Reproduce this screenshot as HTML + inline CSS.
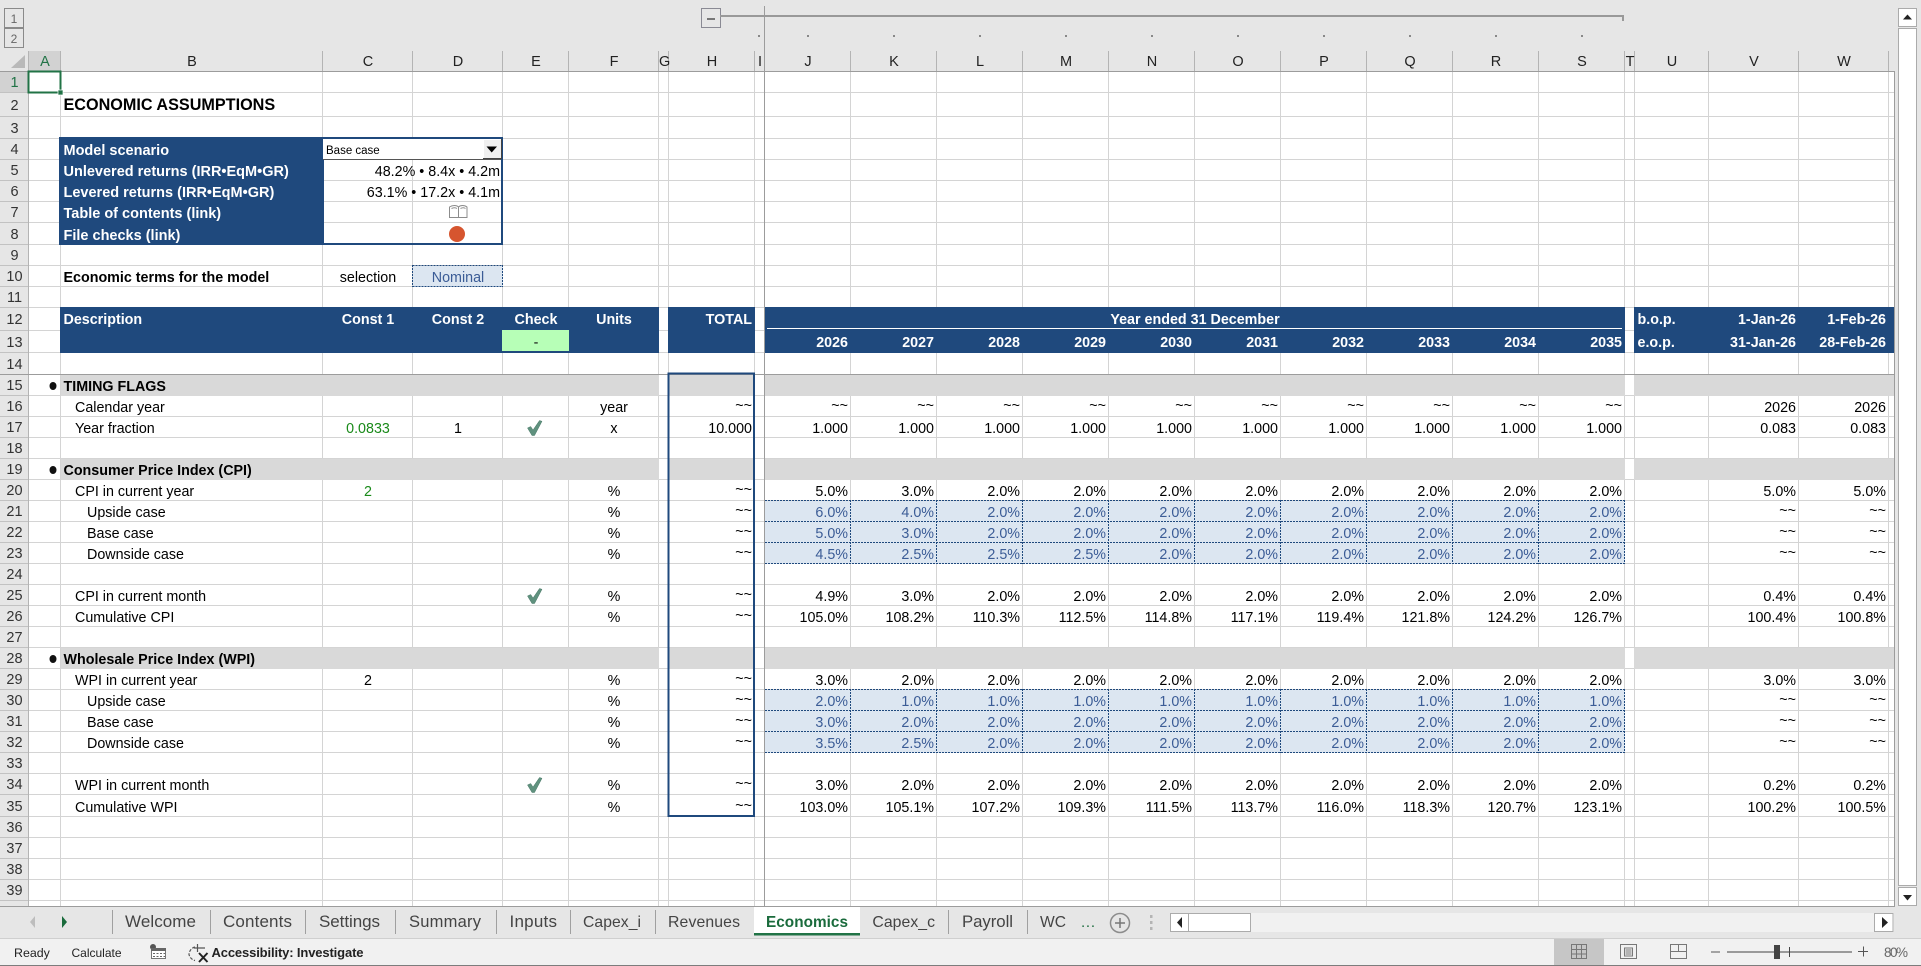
<!DOCTYPE html>
<html><head><meta charset="utf-8"><title>Economics</title>
<style>
html,body{margin:0;padding:0;width:1921px;height:966px;overflow:hidden;background:#e6e6e6}
body{position:relative;font-family:"Liberation Sans",sans-serif}
svg{position:absolute;left:0;top:0}
svg text{font-family:"Liberation Sans",sans-serif}
table{position:absolute;left:0;top:52px;width:1894px;table-layout:fixed;border-collapse:collapse;border-spacing:0;font-size:14.3px;line-height:1;color:#000}
tr{height:21px}
td{padding:2px 3px 0 0;text-align:right;white-space:nowrap;vertical-align:middle}
td.l{text-align:left;padding:2px 0 0 2.5px}
td.i1{text-align:left;padding:2px 0 0 14px}
td.i2{text-align:left;padding:2px 0 0 26px}
td.c{text-align:center;padding:2px 0 0 0}
td.y{padding:0 3px 2px 0}
td:first-child{padding:0;text-align:center;font-size:14.5px;color:#333}
tr.t td{padding:0;text-align:center;font-size:14.5px;color:#222}
.b{font-weight:bold}
.w{font-weight:bold;color:#fff;font-size:14.5px}
tr.h td{padding-top:0}
tr.h td:not(:first-child){font-weight:bold;color:#fff}
tr.h td.k{font-weight:normal;color:#111}
.g{color:#1a8a1a}
.e{color:#3b5c96}
tr.d td:nth-child(n+11):nth-child(-n+20){color:#3b5c96}
</style></head><body>
<svg width="1921" height="966" viewBox="0 0 1921 966">
<rect x="29" y="72" width="1865" height="834" fill="#fff"/>
<rect x="0" y="72" width="28" height="21" fill="#d2d2d2"/>
<rect x="29" y="51" width="32" height="20" fill="#d2d2d2"/>
<polygon points="11,68 25,68 25,55" fill="#b9b9b9"/>
<path fill="none" stroke="#c2c2c2" d="M0 92.5H28M0 116.5H28M0 138.5H28M0 159.5H28M0 180.5H28M0 201.5H28M0 222.5H28M0 244.5H28M0 265.5H28M0 286.5H28M0 307.5H28M0 330.5H28M0 352.5H28M0 395.5H28M0 416.5H28M0 437.5H28M0 458.5H28M0 479.5H28M0 500.5H28M0 521.5H28M0 542.5H28M0 563.5H28M0 584.5H28M0 605.5H28M0 626.5H28M0 647.5H28M0 668.5H28M0 689.5H28M0 710.5H28M0 731.5H28M0 752.5H28M0 773.5H28M0 794.5H28M0 816.5H28M0 837.5H28M0 858.5H28M0 879.5H28M0 900.5H28"/>
<path fill="none" stroke="#b4b4b4" d="M28.5 51V906M60.5 51V71M322.5 51V71M412.5 51V71M502.5 51V71M568.5 51V71M658.5 51V71M668.5 51V71M754.5 51V71M850.5 51V71M936.5 51V71M1022.5 51V71M1108.5 51V71M1194.5 51V71M1280.5 51V71M1366.5 51V71M1452.5 51V71M1538.5 51V71M1624.5 51V71M1634.5 51V71M1708.5 51V71M1798.5 51V71M1888.5 51V71"/>
<path fill="none" stroke="#d4d4d4" d="M60.5 72V906M322.5 72V906M412.5 72V906M502.5 72V906M568.5 72V906M658.5 72V906M668.5 72V906M754.5 72V906M850.5 72V906M936.5 72V906M1022.5 72V906M1108.5 72V906M1194.5 72V906M1280.5 72V906M1366.5 72V906M1452.5 72V906M1538.5 72V906M1624.5 72V906M1634.5 72V906M1708.5 72V906M1798.5 72V906M1888.5 72V906M29 92.5H1894M29 116.5H1894M29 138.5H1894M29 159.5H1894M29 180.5H1894M29 201.5H1894M29 222.5H1894M29 244.5H1894M29 265.5H1894M29 286.5H1894M29 307.5H1894M29 330.5H1894M29 352.5H1894M29 395.5H1894M29 416.5H1894M29 437.5H1894M29 458.5H1894M29 479.5H1894M29 500.5H1894M29 521.5H1894M29 542.5H1894M29 563.5H1894M29 584.5H1894M29 605.5H1894M29 626.5H1894M29 647.5H1894M29 668.5H1894M29 689.5H1894M29 710.5H1894M29 731.5H1894M29 752.5H1894M29 773.5H1894M29 794.5H1894M29 816.5H1894M29 837.5H1894M29 858.5H1894M29 879.5H1894M29 900.5H1894"/>
<g fill="#1f497d">
<rect x="59" y="137" width="264" height="108"/>
<rect x="60" y="307" width="599" height="46"/>
<rect x="668" y="307" width="87" height="46"/>
<rect x="765" y="307" width="860" height="46"/>
<rect x="1634" y="307" width="260" height="46"/>
</g>
<rect x="767" y="328" width="855" height="1" fill="#fff"/>
<rect x="502" y="330" width="67" height="21" fill="#b7ffb7"/>
<g fill="#d9d9d9">
<rect x="61" y="375" width="598" height="21"/><rect x="669" y="375" width="86" height="21"/><rect x="765" y="375" width="860" height="21"/><rect x="1634" y="375" width="260" height="21"/>
<rect x="61" y="459" width="598" height="21"/><rect x="669" y="459" width="86" height="21"/><rect x="765" y="459" width="860" height="21"/><rect x="1634" y="459" width="260" height="21"/>
<rect x="61" y="648" width="598" height="21"/><rect x="669" y="648" width="86" height="21"/><rect x="765" y="648" width="860" height="21"/><rect x="1634" y="648" width="260" height="21"/>
</g>
<ellipse cx="53" cy="386" rx="3.5" ry="4" fill="#111"/>
<ellipse cx="53" cy="470" rx="3.5" ry="4" fill="#111"/>
<ellipse cx="53" cy="659" rx="3.5" ry="4" fill="#111"/>
<rect x="765" y="501" width="860" height="63" fill="#dce6f1"/>
<rect x="765" y="690" width="860" height="63" fill="#dce6f1"/>
<rect x="413" y="266" width="90" height="21" fill="#dce6f1"/>
<path fill="none" stroke="#1f497d" stroke-dasharray="2 1" d="M765 500.5H1625M765 521.5H1625M765 542.5H1625M765 563.5H1625M850.5 500V564M936.5 500V564M1022.5 500V564M1108.5 500V564M1194.5 500V564M1280.5 500V564M1366.5 500V564M1452.5 500V564M1538.5 500V564M1624.5 500V564M765 689.5H1625M765 710.5H1625M765 731.5H1625M765 752.5H1625M850.5 689V753M936.5 689V753M1022.5 689V753M1108.5 689V753M1194.5 689V753M1280.5 689V753M1366.5 689V753M1452.5 689V753M1538.5 689V753M1624.5 689V753M412.5 265.5H503M412.5 286.5H503M412.5 265V287M502.5 265V287"/>
<path fill="none" stroke="#9c9c9c" d="M0 71.5H1895M0 374.5H1894M764.5 6V906M0 906.5H1895M1894.5 71V906"/>
<rect x="323" y="138" width="179" height="106" fill="none" stroke="#1f497d" stroke-width="2"/>
<rect x="323" y="139" width="178" height="20" fill="#fff"/>
<rect x="323" y="159" width="178" height="1" fill="#555"/>
<rect x="483" y="139" width="18" height="20" fill="#f0f0f0"/>
<path fill="none" stroke="#fff" d="M483.5 159V139.5H501"/>
<path fill="none" stroke="#444" d="M483 158.5H501.5V139"/>
<polygon points="486.5,146.5 497,146.5 491.7,152.5" fill="#000"/>
<path d="M449.5 207c3-2 7-2 9 0c2-2 6-2 8.5 0v10.500h-17.500zM458.500 207v10.500M451.500 208.500c2-1 4-1 5.500 0M460.500 208.500c2-1 3.500-1 5 0" fill="#fff" stroke="#8c8c8c" stroke-width="1"/>
<ellipse cx="457" cy="234" rx="8" ry="8" fill="#d6552f"/>
<rect x="668.500" y="373.500" width="85.500" height="442.500" fill="none" stroke="#1f497d" stroke-width="2"/>
<g fill="#5f917e" stroke="#4a7a68" stroke-width=".5">
<path d="M527.500 428l3.200-1.500 2.300 3.500 6.500-9.500 2.500.8-7.500 14.200h-2.500z"/>
<path d="M527.500 596l3.200-1.500 2.300 3.500 6.500-9.500 2.500.8-7.500 14.200h-2.500z"/>
<path d="M527.500 785l3.200-1.500 2.300 3.500 6.500-9.500 2.500.8-7.500 14.200h-2.500z"/>
</g>
<rect x="28.500" y="71.500" width="32" height="21" fill="none" stroke="#217346" stroke-width="2"/>
<rect x="58" y="90" width="5" height="5" fill="#217346" stroke="#fff" stroke-width=".7"/>
<rect x="29" y="71" width="32" height="1" fill="#217346"/>
<rect x="4.500" y="8.500" width="19" height="19" fill="#e6e6e6" stroke="#8a8a8a"/>
<rect x="4.500" y="28.500" width="19" height="19" fill="#e6e6e6" stroke="#8a8a8a"/>
<text x="14" y="23" font-size="12" text-anchor="middle" fill="#666">1</text>
<text x="14" y="43" font-size="12" text-anchor="middle" fill="#666">2</text>
<rect x="701.500" y="8.500" width="19" height="19" fill="#e6e6e6" stroke="#8a8a94"/>
<rect x="707" y="18" width="8" height="2" fill="#777"/>
<rect x="720" y="15" width="904" height="2" fill="#999"/>
<rect x="1622" y="15" width="2" height="6" fill="#999"/>
<path fill="#888" d="M758 35h2v2h-2zM807 35h2v2h-2zM893 35h2v2h-2zM979 35h2v2h-2zM1065 35h2v2h-2zM1151 35h2v2h-2zM1237 35h2v2h-2zM1323 35h2v2h-2zM1409 35h2v2h-2zM1495 35h2v2h-2zM1581 35h2v2h-2z"/>
<rect x="1898.500" y="8.500" width="18" height="18" fill="#fff" stroke="#ababab"/>
<rect x="1898.500" y="28.500" width="18" height="857" fill="#fff" stroke="#ababab"/>
<rect x="1898.500" y="887.500" width="18" height="18" fill="#fff" stroke="#ababab"/>
<polygon points="1903,19.500 1912,19.500 1907.500,14.500" fill="#222"/>
<polygon points="1903,895 1912,895 1907.500,900.500" fill="#222"/>
<rect x="754" y="907" width="106" height="28" fill="#fff"/>
<rect x="754" y="933" width="106" height="2.500" fill="#217346"/>
<path fill="none" stroke="#a0a0a0" d="M112.500 910V934M210.500 910V934M305.500 910V934M395.500 910V934M496.500 910V934M570.500 910V934M655.500 910V934M948.500 910V934M1027.500 910V934"/>
<polygon points="35,916 30,922 35,928" fill="#bdbdbd"/>
<polygon points="62,916 67,922 62,928" fill="#1a6b3c"/>
<g font-size="17" fill="#444">
<text x="125" y="927" textLength="71" lengthAdjust="spacing">Welcome</text>
<text x="223" y="927" textLength="69" lengthAdjust="spacing">Contents</text>
<text x="319" y="927" textLength="61" lengthAdjust="spacing">Settings</text>
<text x="409" y="927" textLength="72" lengthAdjust="spacing" font-size="16.500">Summary</text>
<text x="509.500" y="927" textLength="47.500" lengthAdjust="spacing">Inputs</text>
<text x="583" y="927" textLength="58" lengthAdjust="spacing" font-size="15.700">Capex_i</text>
<text x="668" y="927" textLength="72" lengthAdjust="spacing" font-size="15.800">Revenues</text>
<text x="872.400" y="927" textLength="62.600" lengthAdjust="spacing" font-size="15.800">Capex_c</text>
<text x="962" y="927" textLength="51" lengthAdjust="spacing" font-size="16.800">Payroll</text>
<text x="1040" y="927" textLength="26" lengthAdjust="spacing" font-size="15.600">WC</text>
</g>
<text x="766" y="927" font-size="15.300" font-weight="bold" fill="#1a6b3c" textLength="82" lengthAdjust="spacing">Economics</text>
<text x="1081" y="927" font-size="15" fill="#1a6b3c" textLength="14" lengthAdjust="spacing">...</text>
<circle cx="1120" cy="923" r="9.500" fill="none" stroke="#8c8c8c" stroke-width="1.500"/>
<path fill="none" stroke="#777" stroke-width="1.500" d="M1115 923h10M1120 918v10"/>
<path fill="#b4b4b4" d="M1150 915h2.500v3H1150zM1150 921h2.500v3H1150zM1150 927h2.500v3H1150z"/>
<rect x="1170" y="913" width="724" height="19" fill="#f1f1f1"/>
<rect x="1170.500" y="913.500" width="18" height="18" fill="#fff" stroke="#ababab"/>
<rect x="1188.500" y="913.500" width="62" height="18" fill="#fff" stroke="#ababab"/>
<rect x="1874.500" y="913.500" width="18.500" height="18" fill="#fff" stroke="#ababab"/>
<polygon points="1182,917 1177,922.500 1182,928" fill="#222"/>
<polygon points="1882,917 1888,922.500 1882,928" fill="#222"/>
<rect x="0" y="938" width="1921" height="28" fill="#f1f1f1"/>
<rect x="0" y="938" width="1921" height="1" fill="#cfcfcf"/>
<rect x="0" y="965" width="1921" height="1" fill="#7c7c7c"/>
<text x="14" y="957" font-size="12.400" fill="#222">Ready</text>
<text x="71.500" y="957" font-size="12" fill="#222">Calculate</text>
<circle cx="153" cy="947" r="3" fill="#555"/>
<rect x="151.500" y="948.500" width="14" height="10" fill="#fff" stroke="#777"/>
<rect x="151" y="948" width="15" height="3" fill="#666"/>
<path stroke="#666" stroke-dasharray="2 1.500" d="M153 953.500h12M153 956.500h12" fill="none"/>
<path fill="none" stroke="#555" stroke-width="1.200" stroke-dasharray="3 1.500" d="M195 947a8 8 0 0 0-6 7.500a8 8 0 0 0 6 6"/>
<path fill="none" stroke="#555" stroke-width="1.200" d="M197.500 944v8M194 948h11"/>
<path fill="none" stroke="#222" stroke-width="2" d="M199 953l8.500 9M207.500 953l-8.500 9"/>
<text x="211.500" y="957" font-size="13" font-weight="bold" fill="#222" textLength="152" lengthAdjust="spacing">Accessibility: Investigate</text>
<rect x="1554" y="939" width="50" height="26" fill="#c6c6c6"/>
<path fill="none" stroke="#777" d="M1571.500 944.500h15v14h-15zM1571.500 949.500h15M1571.500 954h15M1576.500 944.500v14M1581.500 944.500v14"/>
<path fill="none" stroke="#777" d="M1620.500 944.500h16v14h-16zM1624.500 948v8h8v-8zM1625.500 950h6M1625.500 952h6M1625.500 954h6"/>
<path fill="none" stroke="#777" d="M1670.500 944.500h16v14h-16zM1670.500 951.500h16M1678.500 944.500v7"/>
<rect x="1711" y="951.500" width="9" height="1" fill="#555"/>
<rect x="1727" y="951.500" width="125" height="1" fill="#444"/>
<rect x="1774" y="945" width="6" height="14" fill="#444"/>
<rect x="1789" y="947" width="1" height="10" fill="#444"/>
<path fill="none" stroke="#555" d="M1858 951.500h10M1863.500 946.500v10"/>
<text x="1884" y="957" font-size="13.500" fill="#666" textLength="24" lengthAdjust="spacing">80%</text>
</svg>

<table>
<colgroup><col style="width:29px"><col style="width:32px"><col style="width:262px"><col style="width:90px"><col style="width:90px"><col style="width:66px"><col style="width:90px"><col style="width:10px"><col style="width:86px"><col style="width:10px"><col style="width:86px"><col style="width:86px"><col style="width:86px"><col style="width:86px"><col style="width:86px"><col style="width:86px"><col style="width:86px"><col style="width:86px"><col style="width:86px"><col style="width:86px"><col style="width:10px"><col style="width:74px"><col style="width:90px"><col style="width:90px"><col style="width:5px"></colgroup>
<tr class="t"><td><td style="color:#217346">A<td>B<td>C<td>D<td>E<td>F<td>G<td>H<td>I<td>J<td>K<td>L<td>M<td>N<td>O<td>P<td>Q<td>R<td>S<td>T<td>U<td>V<td>W<td></tr>
<tr><td style="color:#217346">1<td colspan="24"></tr>
<tr style="height:24px"><td>2<td><td class="l b" style="font-size:16.2px;padding-top:0;padding-bottom:2px">ECONOMIC ASSUMPTIONS<td colspan="22"></tr>
<tr style="height:22px"><td>3<td colspan="24"></tr>
<tr><td>4<td><td class="l w">Model scenario<td colspan="2" class="l" style="font-size:11.5px;padding-left:3px;color:#000">Base case<td colspan="20"></tr>
<tr><td>5<td><td class="l w">Unlevered returns (IRR•EqM•GR)<td colspan="2">48.2% • 8.4x • 4.2m<td colspan="20"></tr>
<tr><td>6<td><td class="l w">Levered returns (IRR•EqM•GR)<td colspan="2">63.1% • 17.2x • 4.1m<td colspan="20"></tr>
<tr><td>7<td><td class="l w">Table of contents (link)<td colspan="22"></tr>
<tr style="height:22px"><td>8<td><td class="l w">File checks (link)<td colspan="22"></tr>
<tr><td>9<td colspan="24"></tr>
<tr><td>10<td><td class="l b">Economic terms for the model<td class="c">selection<td class="c e">Nominal<td colspan="20"></tr>
<tr><td>11<td colspan="24"></tr>
<tr class="h" style="height:23px"><td>12<td><td class="l">Description<td class="c">Const 1<td class="c">Const 2<td class="c">Check<td class="c">Units<td><td>TOTAL<td><td colspan="10" class="c">Year ended 31 December<td><td class="l">b.o.p.<td>1-Jan-26<td>1-Feb-26<td></tr>
<tr class="h" style="height:22px"><td>13<td><td><td><td><td class="c k">-<td><td><td><td><td>2026<td>2027<td>2028<td>2029<td>2030<td>2031<td>2032<td>2033<td>2034<td>2035<td><td class="l">e.o.p.<td>31-Jan-26<td>28-Feb-26<td></tr>
<tr style="height:22px"><td>14<td colspan="24"></tr>
<tr><td>15<td><td class="l b">TIMING FLAGS<td colspan="22"></tr>
<tr><td>16<td><td class="i1">Calendar year<td><td><td><td class="c">year<td><td class="y">~~<td><td class="y">~~<td class="y">~~<td class="y">~~<td class="y">~~<td class="y">~~<td class="y">~~<td class="y">~~<td class="y">~~<td class="y">~~<td class="y">~~<td><td><td>2026<td>2026<td></tr>
<tr><td>17<td><td class="i1">Year fraction<td class="c g">0.0833<td class="c">1<td><td class="c">x<td><td>10.000<td><td>1.000<td>1.000<td>1.000<td>1.000<td>1.000<td>1.000<td>1.000<td>1.000<td>1.000<td>1.000<td><td><td>0.083<td>0.083<td></tr>
<tr><td>18<td colspan="24"></tr>
<tr><td>19<td><td class="l b">Consumer Price Index (CPI)<td colspan="22"></tr>
<tr><td>20<td><td class="i1">CPI in current year<td class="c g">2<td><td><td class="c">%<td><td class="y">~~<td><td>5.0%<td>3.0%<td>2.0%<td>2.0%<td>2.0%<td>2.0%<td>2.0%<td>2.0%<td>2.0%<td>2.0%<td><td><td>5.0%<td>5.0%<td></tr>
<tr class="d"><td>21<td><td class="i2">Upside case<td><td><td><td class="c">%<td><td class="y">~~<td><td>6.0%<td>4.0%<td>2.0%<td>2.0%<td>2.0%<td>2.0%<td>2.0%<td>2.0%<td>2.0%<td>2.0%<td><td><td class="y">~~<td class="y">~~<td></tr>
<tr class="d"><td>22<td><td class="i2">Base case<td><td><td><td class="c">%<td><td class="y">~~<td><td>5.0%<td>3.0%<td>2.0%<td>2.0%<td>2.0%<td>2.0%<td>2.0%<td>2.0%<td>2.0%<td>2.0%<td><td><td class="y">~~<td class="y">~~<td></tr>
<tr class="d"><td>23<td><td class="i2">Downside case<td><td><td><td class="c">%<td><td class="y">~~<td><td>4.5%<td>2.5%<td>2.5%<td>2.5%<td>2.0%<td>2.0%<td>2.0%<td>2.0%<td>2.0%<td>2.0%<td><td><td class="y">~~<td class="y">~~<td></tr>
<tr><td>24<td colspan="24"></tr>
<tr><td>25<td><td class="i1">CPI in current month<td><td><td><td class="c">%<td><td class="y">~~<td><td>4.9%<td>3.0%<td>2.0%<td>2.0%<td>2.0%<td>2.0%<td>2.0%<td>2.0%<td>2.0%<td>2.0%<td><td><td>0.4%<td>0.4%<td></tr>
<tr><td>26<td><td class="i1">Cumulative CPI<td><td><td><td class="c">%<td><td class="y">~~<td><td>105.0%<td>108.2%<td>110.3%<td>112.5%<td>114.8%<td>117.1%<td>119.4%<td>121.8%<td>124.2%<td>126.7%<td><td><td>100.4%<td>100.8%<td></tr>
<tr><td>27<td colspan="24"></tr>
<tr><td>28<td><td class="l b">Wholesale Price Index (WPI)<td colspan="22"></tr>
<tr><td>29<td><td class="i1">WPI in current year<td class="c">2<td><td><td class="c">%<td><td class="y">~~<td><td>3.0%<td>2.0%<td>2.0%<td>2.0%<td>2.0%<td>2.0%<td>2.0%<td>2.0%<td>2.0%<td>2.0%<td><td><td>3.0%<td>3.0%<td></tr>
<tr class="d"><td>30<td><td class="i2">Upside case<td><td><td><td class="c">%<td><td class="y">~~<td><td>2.0%<td>1.0%<td>1.0%<td>1.0%<td>1.0%<td>1.0%<td>1.0%<td>1.0%<td>1.0%<td>1.0%<td><td><td class="y">~~<td class="y">~~<td></tr>
<tr class="d"><td>31<td><td class="i2">Base case<td><td><td><td class="c">%<td><td class="y">~~<td><td>3.0%<td>2.0%<td>2.0%<td>2.0%<td>2.0%<td>2.0%<td>2.0%<td>2.0%<td>2.0%<td>2.0%<td><td><td class="y">~~<td class="y">~~<td></tr>
<tr class="d"><td>32<td><td class="i2">Downside case<td><td><td><td class="c">%<td><td class="y">~~<td><td>3.5%<td>2.5%<td>2.0%<td>2.0%<td>2.0%<td>2.0%<td>2.0%<td>2.0%<td>2.0%<td>2.0%<td><td><td class="y">~~<td class="y">~~<td></tr>
<tr><td>33<td colspan="24"></tr>
<tr><td>34<td><td class="i1">WPI in current month<td><td><td><td class="c">%<td><td class="y">~~<td><td>3.0%<td>2.0%<td>2.0%<td>2.0%<td>2.0%<td>2.0%<td>2.0%<td>2.0%<td>2.0%<td>2.0%<td><td><td>0.2%<td>0.2%<td></tr>
<tr style="height:22px"><td>35<td><td class="i1">Cumulative WPI<td><td><td><td class="c">%<td><td class="y">~~<td><td>103.0%<td>105.1%<td>107.2%<td>109.3%<td>111.5%<td>113.7%<td>116.0%<td>118.3%<td>120.7%<td>123.1%<td><td><td>100.2%<td>100.5%<td></tr>
<tr><td>36<td colspan="24"></tr>
<tr><td>37<td colspan="24"></tr>
<tr><td>38<td colspan="24"></tr>
<tr><td>39<td colspan="24"></tr>
</table>
</body></html>
